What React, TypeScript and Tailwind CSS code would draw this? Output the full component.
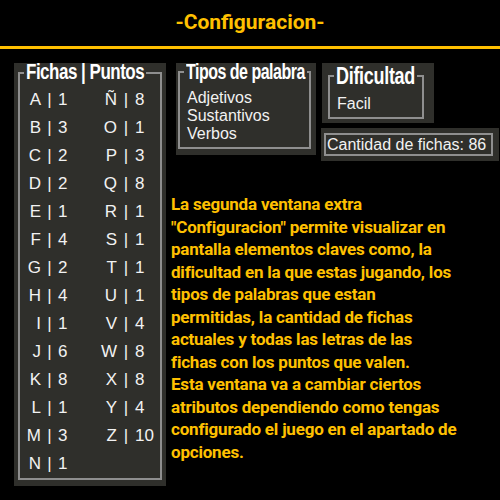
import React from "react";

const left = [
  ["A", 1], ["B", 3], ["C", 2], ["D", 2], ["E", 1], ["F", 4], ["G", 2],
  ["H", 4], ["I", 1], ["J", 6], ["K", 8], ["L", 1], ["M", 3], ["N", 1],
];
const right = [
  ["Ñ", 8], ["O", 1], ["P", 3], ["Q", 8], ["R", 1], ["S", 1], ["T", 1],
  ["U", 1], ["V", 4], ["W", 8], ["X", 8], ["Y", 4], ["Z", 10],
];

const lines = [
  "La segunda ventana extra",
  "\"Configuracion\" permite visualizar en",
  "pantalla elementos claves como, la",
  "dificultad en la que estas jugando, los",
  "tipos de palabras que estan",
  "permitidas, la cantidad de fichas",
  "actuales y todas las letras de las",
  "fichas con los puntos que valen.",
  "Esta ventana va a cambiar ciertos",
  "atributos dependiendo como tengas",
  "configurado el juego en el apartado de",
  "opciones.",
];

const Legend = ({ children, text }: { children: React.ReactNode; text: string }) => (
  <legend className="px-[2px] h-[18px] leading-[18px] whitespace-nowrap">
    <span className={`inline-block font-bold text-white font-['Liberation_Sans',sans-serif] ${text}`}>
      {children}
    </span>
  </legend>
);

// letra | puntos, letra alineada a la derecha contra la barra
const Cell = ({ l, n, lw, pw }: { l: string; n: number; lw: string; pw: string }) => (
  <div className="flex h-[28px] items-center">
    <span className={`${lw} text-right`}>{l}</span>
    <span className={`${pw} text-center`}>|</span>
    <span>{n}</span>
  </div>
);

export default function App() {
  return (
    <div className="w-[500px] h-[500px] bg-black overflow-hidden font-['Liberation_Sans',Arial,sans-serif]">
      {/* Header */}
      <div className="h-[49px] border-b-[3px] border-[#ffc000] flex justify-center pt-[9px]">
        <h1 className="text-[21px] font-bold leading-[26px] text-[#ffc000] font-['Roboto',sans-serif]">
          -Configuracion-
        </h1>
      </div>

      <div className="flex pl-[14px] pt-[14px]">
        {/* Fichas */}
        <div className="w-[152px] h-[423px] bg-[#2f2f2b] px-[4px] pt-px pb-[6px] flex">
          <fieldset className="flex-1 border-2 border-[#8f8f8f] pl-[4px] pt-[4px]">
            <Legend text="text-[17px] tracking-[-0.5px] scale-y-[1.3]">Fichas | Puntos</Legend>
            <div className="grid grid-cols-[71px_1fr] text-[17px] text-[#f2f2f2]">
              <div>
                {left.map(([l, n]) => (
                  <Cell key={l} l={l as string} n={n as number} lw="w-[17px]" pw="w-[17px]" />
                ))}
              </div>
              <div>
                {right.map(([l, n]) => (
                  <Cell key={l} l={l as string} n={n as number} lw="w-[22px]" pw="w-[18px]" />
                ))}
              </div>
            </div>
          </fieldset>
        </div>

        <div className="ml-[10px] flex flex-col">
          <div className="flex items-start">
            {/* Tipos de palabra */}
            <div className="w-[140px] h-[92px] bg-[#2f2f2b] pl-[2px] pr-[5px] pb-[6px] flex">
              <fieldset className="flex-1 border-2 border-[#8f8f8f] pl-[4px] pt-[8px] text-[16px] leading-[18px] text-[#f2f2f2]">
                <Legend text="text-[16px] tracking-[-0.5px] scale-y-[1.35]">Tipos de palabra</Legend>
                <div className="pl-[3px]">Adjetivos</div>
                <div className="pl-[3px]">Sustantivos</div>
                <div className="pl-[3px]">Verbos</div>
              </fieldset>
            </div>

            <div className="ml-[6px] flex flex-col">
              {/* Dificultad */}
              <div className="w-[112px] h-[60px] bg-[#2f2f2b] pl-[6px] pr-[10px] pt-[4px] pb-[4px] flex">
                <fieldset className="flex-1 border-2 border-[#8f8f8f] pl-[4px] pt-[10px] text-[16px] leading-[18px] text-[#f2f2f2]">
                  <Legend text="text-[18px] tracking-[-0.3px] scale-y-[1.3]">Dificultad</Legend>
                  <div className="pl-[3px]">Facil</div>
                </fieldset>
              </div>
              {/* Cantidad */}
              <div className="-ml-px mt-[5px] w-[178px] h-[33px] bg-[#2f2f2b] pl-[3px] pr-[6px] pt-[5px] pb-[5px]">
                <div className="h-full border-2 border-[#8f8f8f] px-px text-[16px] leading-[19px] text-[#f2f2f2] whitespace-nowrap">
                  Cantidad de fichas: 86
                </div>
              </div>
            </div>
          </div>

          <p className="-ml-[5px] mt-[32px] text-[17px] leading-[22.5px] font-bold text-[#ffc000] tracking-[-0.2px] whitespace-nowrap font-['Roboto',sans-serif]">
            {lines.map((t, i) => (
              <React.Fragment key={i}>
                {t}
                <br />
              </React.Fragment>
            ))}
          </p>
        </div>
      </div>
    </div>
  );
}
